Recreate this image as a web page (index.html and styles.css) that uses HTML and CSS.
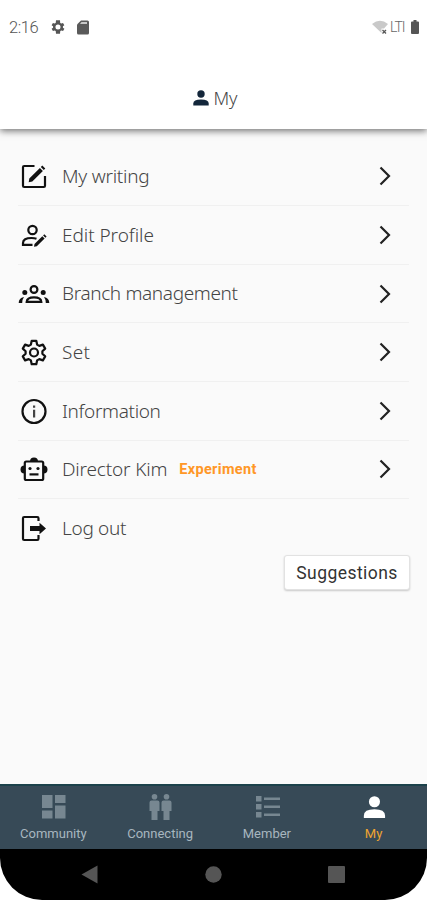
FILE: index.html
```html
<!DOCTYPE html>
<html lang="en">
<head>
<meta charset="utf-8">
<title>My</title>
<link rel="stylesheet" href="styles.css">
</head>
<body>
<div class="phone">
  <header class="top">
    <div class="status">
      <span class="time">2:16</span>
      <svg class="st-gear" width="16" height="16" viewBox="0 0 24 24"><path fill="#555" fill-rule="evenodd" d="M19.4 13a7.500 7.500 0 0 0 0-2l2.100-1.600-2-3.500-2.500 1a7.500 7.500 0 0 0-1.700-1L15 2H9l-.4 3.900a7.500 7.500 0 0 0-1.700 1l-2.500-1-2 3.500L4.600 11a7.500 7.500 0 0 0 0 2l-2.200 1.600 2 3.500 2.500-1a7.500 7.500 0 0 0 1.700 1L9 22h6l.4-3.900a7.500 7.500 0 0 0 1.700-1l2.500 1 2-3.500zM12 8.200a3.800 3.800 0 1 1 0 7.600 3.800 3.800 0 0 1 0-7.600z"/></svg>
      <svg class="st-sd" width="12" height="15" viewBox="0 0 12 15"><path fill="#5a5a5a" d="M4 .5h6.500Q12 .5 12 2v11q0 1.500-1.500 1.500h-9Q0 14.500 0 13V4.500z"/><path fill="#c8c8c8" d="M4.500 2H10v2H3z"/></svg>
      <span class="grow"></span>
      <svg class="st-wifi" width="16" height="15" viewBox="0 0 16 15"><path fill="#c9c9c9" d="M0 4Q8-2.500 16 4l-4 4.500H9.500V13z"/><path stroke="#555" stroke-width="1.300" d="m10.500 10 3.500 3.500m0-3.500-3.500 3.500"/></svg>
      <span class="lte">LTI</span>
      <svg class="st-bat" width="8" height="14" viewBox="0 0 8 14"><path fill="#555" d="M2.500 0h3v1.500H7q1 0 1 1V13q0 1-1 1H1q-1 0-1-1V2.500q0-1 1-1h1.500z"/></svg>
    </div>
    <h1 class="title">
      <svg width="16" height="16" viewBox="0 0 16 16" fill="#13263a"><circle cx="8" cy="4" r="3.700"/><path d="M.3 15.500v-2q0-4 7.700-4t7.700 4v2z"/></svg>
      <span class="title-text">My</span>
    </h1>
  </header>

  <main class="content">
    <ul class="menu">
      <li class="row">
        <svg class="icon" viewBox="0 0 32 32"><path class="ln" d="M16.500 6H6.200Q5 6 5 7.200v18.600Q5 27 6.200 27h19.600q1.200 0 1.200-1.200V16"/><path d="m11.300 18.500 10.600-10.600 3 3L14.300 21.500l-3.600.7zM22.800 7l1.500-1.500 3 3-1.500 1.500z"/></svg>
        <span class="label w1">My writing</span><svg class="chev" viewBox="0 0 12 20"><path d="m1.500 1.500 8.500 8.500-8.500 8.500"/></svg>
      </li>
      <li class="row">
        <svg class="icon" viewBox="0 0 32 32"><circle class="ln" cx="14.500" cy="11" r="4.200"/><path class="ln" d="M18.500 19.700Q16.500 19 13.500 19 5 19 5 24v1.800h9.500"/><path d="m16.500 25 7.800-7.800 2.300 2.300-7.800 7.800-2.800.5zM25.100 16.400l1.200-1.200 2.300 2.300-1.200 1.200z"/></svg>
        <span class="label w2">Edit Profile</span><svg class="chev" viewBox="0 0 12 20"><path d="m1.500 1.500 8.500 8.500-8.500 8.500"/></svg>
      </li>
      <li class="row">
        <svg class="icon" viewBox="0 0 32 32"><circle class="ln" cx="16" cy="11.500" r="3.400"/><path class="ln" d="M8.700 23.800Q9 19.300 16 19.300t7.300 4.500z"/><circle cx="6.800" cy="14.500" r="2.500"/><circle cx="25.200" cy="14.500" r="2.500"/><path d="M.7 25q0-5 5.300-6-1.600 2-1.800 6zM31.300 25q0-5-5.300-6 1.600 2 1.800 6z"/></svg>
        <span class="label w3">Branch management</span><svg class="chev" viewBox="0 0 12 20"><path d="m1.500 1.500 8.500 8.500-8.500 8.500"/></svg>
      </li>
      <li class="row">
        <svg class="icon" viewBox="0 0 32 32"><path class="ln" stroke-linejoin="round" d="m13.700 4.800h4.600l.8 3.800 2.200 1.300 3.600-1.300 2.300 4-2.800 2.600v2.600l2.800 2.600-2.300 4-3.600-1.300-2.200 1.300-.8 3.800h-4.600l-.8-3.800-2.200-1.300-3.600 1.300-2.300-4 2.800-2.600v-2.600l-2.800-2.600 2.300-4 3.600 1.300 2.200-1.300z"/><circle class="ln" cx="16" cy="16.500" r="4"/></svg>
        <span class="label w4">Set</span><svg class="chev" viewBox="0 0 12 20"><path d="m1.500 1.500 8.500 8.500-8.500 8.500"/></svg>
      </li>
      <li class="row">
        <svg class="icon" viewBox="0 0 32 32"><circle class="ln" cx="16" cy="16.500" r="11.500"/><path fill="#444" d="M15 10.500h2.200v2.300H15zM15 14.800h2.200v7.700H15z"/></svg>
        <span class="label w5">Information</span><svg class="chev" viewBox="0 0 12 20"><path d="m1.500 1.500 8.500 8.500-8.500 8.500"/></svg>
      </li>
      <li class="row">
        <svg class="icon" viewBox="0 0 32 32"><rect class="ln" x="6.800" y="8.500" width="18.400" height="18.500" rx="1.500"/><path d="M12 8.500q0-4 4-4t4 4zM6.500 12.500v8Q2.500 20.500 2.500 16.500t4-4zM25.500 12.500v8q4 0 4-4t-4-4z"/><circle cx="12" cy="15.500" r="1.600"/><circle cx="20" cy="15.500" r="1.600"/><path d="M11.500 20.300h9v2.200h-9z"/></svg>
        <span class="label w6">Director Kim</span><span class="tag">Experiment</span><svg class="chev" viewBox="0 0 12 20"><path d="m1.500 1.500 8.500 8.500-8.500 8.500"/></svg>
      </li>
      <li class="row">
        <svg class="icon" viewBox="0 0 32 32"><path class="ln" d="M20.500 9V6.200Q20.500 5 19.300 5H6.200Q5 5 5 6.200v20.600Q5 28 6.200 28h13.100q1.200 0 1.200-1.200V23"/><path d="M12 14h9.500v-3.200l6.500 5.700-6.500 5.700V19H12z"/></svg>
        <span class="label w7">Log out</span>
      </li>
    </ul>
    <button class="suggest" type="button"><span>Suggestions</span></button>
  </main>

  <nav class="tabs">
    <a class="tab"><svg viewBox="0 0 26 26"><path d="M2 1h10.500v13H2zM15 1h10.500v8H15zM2 16.500h10.500V24.500H2zM15 11.500h10.500v13H15z"/></svg><span class="t1">Community</span></a>
    <a class="tab"><svg viewBox="0 0 26 26"><circle cx="7.500" cy="2.800" r="2.800"/><circle cx="19.500" cy="2.800" r="2.800"/><path d="M4.500 6.500h6q2 0 2 2V17h-2v9h-6v-9h-2V8.500q0-2 2-2zM16.500 6.500h6q2 0 2 2V17h-2v9h-6v-9h-2V8.500q0-2 2-2z"/></svg><span class="t2">Connecting</span></a>
    <a class="tab"><svg viewBox="0 0 26 26"><path d="M2 2h5.500v5.500H2zM2 10h5.500v5.500H2zM2 18h5.500v5.500H2zM10 3.500h16V6H10zM10 11.500h16V14H10zM10 19.500h16V22H10z"/></svg><span class="t3">Member</span></a>
    <a class="tab on"><svg viewBox="0 0 26 26"><circle cx="13.500" cy="7.300" r="6"/><path d="M2 25v-2.500Q2 15.500 13.500 15.500t11.500 7V25z"/></svg><span class="t4">My</span></a>
  </nav>
  <footer class="sys">
    <svg width="17" height="19" viewBox="0 0 17 19"><path d="M16.500.5v18L.5 9.500z"/></svg>
    <svg width="17" height="17" viewBox="0 0 17 17"><circle cx="8.500" cy="8.500" r="8.200"/></svg>
    <svg width="17" height="17" viewBox="0 0 17 17"><rect width="17" height="17" rx="1"/></svg>
  </footer>
</div>
</body>
</html>
```
FILE: styles.css
```css
* { box-sizing: border-box; }
body { margin: 0; background: #fff; font-family: "Noto Sans", sans-serif; }
.phone { width: 427px; height: 900px; display: flex; flex-direction: column; background: #fff; overflow: hidden; }
.top { height: 129px; flex: none; background: #fff; box-shadow: 0 2px 7px rgba(0,0,0,.55); z-index: 1; }
.status { height: 54px; display: flex; align-items: center; padding: 0 8px 0 9px; }
.time { width: 31px; padding-top: 1px; font: 300 16.5px/20px Roboto, sans-serif; letter-spacing: -.4px; color: #555; }
.st-gear { margin-left: 10px; }
.st-sd { margin-left: 11px; }
.grow { flex: 1; }
.lte { width: 17px; margin: 0 4px 0 2px; font: 300 14px/20px Roboto, sans-serif; letter-spacing: -1px; color: #666; }
.title { margin: 31px 0 0 4px; height: 26px; display: flex; justify-content: center; align-items: center; gap: 4px; font-size: 18px; font-weight: 300; color: #444; }
.content { flex: 1; background: #fafafa; padding: 18.6px 17px 0 18px; }
.menu { margin: 0; padding: 0 1px 0 0; list-style: none; }
.row { height: 58.6px; display: flex; align-items: center; border-bottom: 1px solid #f0f0f0; }
.row:last-child { border: 0; }
.icon { width: 32px; height: 32px; flex: none; fill: #111; }
.ln { fill: none; stroke: #111; stroke-width: 2.2; }
.label { margin-left: 12px; padding-bottom: .5px; font-size: 19px; font-weight: 300; line-height: 28px; white-space: nowrap; color: #444; }
.w1 { letter-spacing: -.25px; }
.w2 { letter-spacing: -.05px; }
.w3 { letter-spacing: -.36px; }
.w4 { letter-spacing: .3px; }
.w5 { letter-spacing: -.35px; }
.w6 { letter-spacing: -.17px; }
.w7 { letter-spacing: -.3px; }
.tag { margin-left: 12px; padding-top: 2px; font: 700 14.5px/20px Roboto, sans-serif; letter-spacing: .33px; color: #ff9727; }
.chev { width: 12px; height: 20px; margin: 0 18px 0 auto; fill: none; stroke: #222; stroke-width: 2.200; }
.suggest { display: flex; justify-content: center; align-items: center; width: 126px; height: 35px; margin: -2.6px 0 0 auto; padding: 0; border: 1px solid #e2e2e2; border-radius: 3px; background: #fff; box-shadow: 0 1px 2px rgba(0,0,0,.2); font: 400 17.5px/20px Roboto, sans-serif; letter-spacing: .45px; color: #333; }
.tabs { height: 65px; flex: none; display: flex; background: #374a57; border-top: 2px solid #1c424b; }
.tab { flex: 1; display: flex; flex-direction: column; align-items: center; padding-top: 8px; font: 400 13px/16px Roboto, sans-serif; color: #a7b6bf; }
.tab svg { width: 26px; height: 26px; margin-bottom: 6px; fill: #778791; }
.tab.on { color: #f0a531; }
.tab.on svg { width: 24px; height: 24px; margin: 1px 0 7px; fill: #fff; }
.sys { height: 51px; flex: none; display: flex; align-items: center; justify-content: space-between; padding: 0 82px 0 81px; background: #000; border-radius: 0 0 42px 42px; fill: #555; }
```
